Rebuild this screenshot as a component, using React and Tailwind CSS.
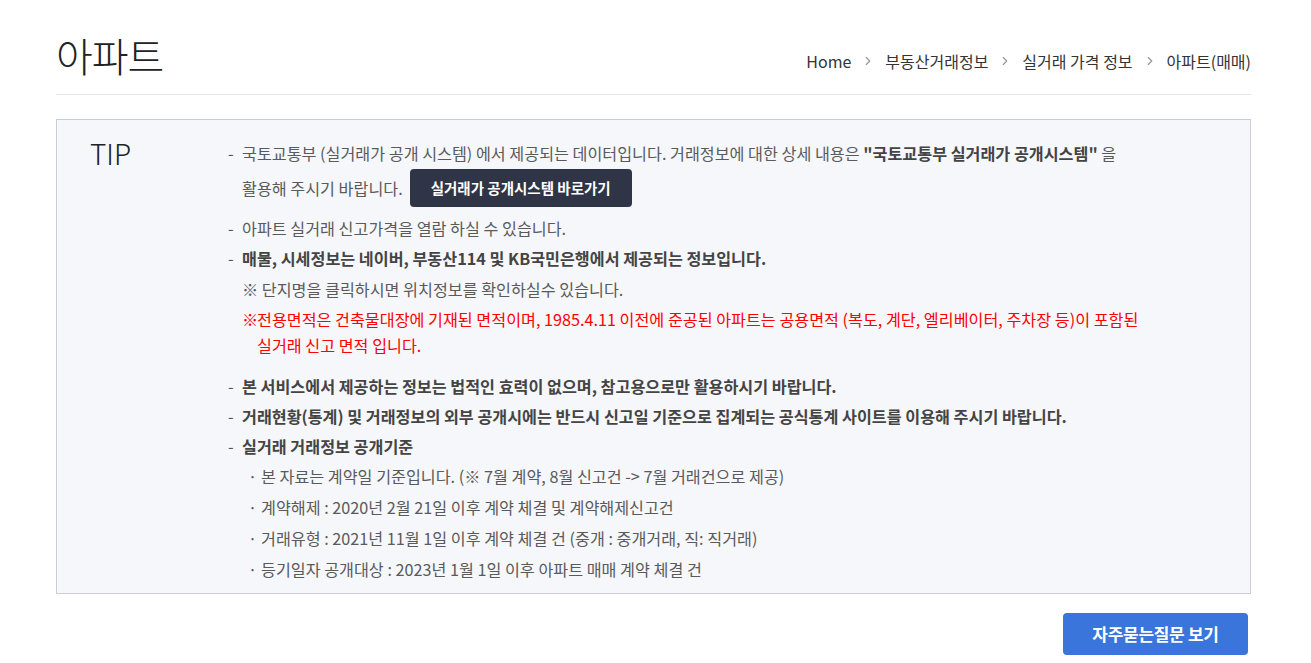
import React from "react";
import { ChevronRight } from "lucide-react";

const Dash = ({ lh = "leading-[30px]" }) => <span className={`w-[14px] shrink-0 font-normal text-[#555] ${lh}`}>-</span>;
const Dot = () => <span className="w-[13px] shrink-0">·</span>;

const App = () => {
  return (
    <div
      className="min-h-screen bg-white"
      style={{ fontFamily: '"Noto Sans CJK KR", "Noto Sans", sans-serif' }}
    >
      <div className="ml-[56px] w-[1195px]">
        {/* header */}
        <div className="flex items-end justify-between border-b border-[#e4e6ea] pt-[33px] pb-[17px]">
          <h1 className="text-[40px] leading-[44px] font-light tracking-[-1px] text-[#222]">
            아파트
          </h1>
          <nav className="mb-[4px] flex items-center text-[16px] leading-[24px] text-[#333]">
            <span>Home</span>
            <ChevronRight size={14} strokeWidth={2} className="mx-[10px] text-[#999]" />
            <span>부동산거래정보</span>
            <ChevronRight size={14} strokeWidth={2} className="mx-[10px] text-[#999]" />
            <span>실거래 가격 정보</span>
            <ChevronRight size={14} strokeWidth={2} className="mx-[10px] text-[#999]" />
            <span>아파트(매매)</span>
          </nav>
        </div>

        {/* tip box */}
        <div className="mt-[24px] flex border border-[#c9ced6] bg-[#f5f7fa] pl-[33px] pt-[18px] pb-[8px]">
          <div className="w-[138px] shrink-0 text-[28px] leading-[30px] font-light text-[#222]">
            TIP
          </div>
          <ul className="text-[16.2px] text-[#5a5a5a] whitespace-nowrap">
            <li className="flex">
              <Dash />
              <div>
                <p className="leading-[30px]">
                  국토교통부 (실거래가 공개 시스템) 에서 제공되는 데이터입니다. 거래정보에 대한 상세 내용은{" "}
                  <b className="font-bold text-[#444]">"국토교통부 실거래가 공개시스템"</b> 을
                </p>
                <div className="mt-[1px] flex h-[38px] items-center">
                  <span>활용해 주시기 바랍니다.</span>
                  <button className="ml-[7px] h-[38px] rounded-[4px] bg-[#2f3447] px-[21px] text-[14.5px] font-bold text-white">
                    실거래가 공개시스템 바로가기
                  </button>
                </div>
              </div>
            </li>
            <li className="mt-[6px] flex leading-[30px]">
              <Dash />
              <span>아파트 실거래 신고가격을 열람 하실 수 있습니다.</span>
            </li>
            <li className="flex">
              <Dash lh="leading-[31px]" />
              <div>
                <p className="leading-[31px] font-bold text-[#444]">
                  매물, 시세정보는 네이버, 부동산114 및 KB국민은행에서 제공되는 정보입니다.
                </p>
                <p className="leading-[31px]">※ 단지명을 클릭하시면 위치정보를 확인하실수 있습니다.</p>
                <div className="mt-[1px] flex leading-[26px] text-[#ff0000]">
                  <span className="w-[15px] shrink-0">※</span>
                  <span>
                    전용면적은 건축물대장에 기재된 면적이며, 1985.4.11 이전에 준공된 아파트는 공용면적 (복도, 계단, 엘리베이터, 주차장 등)이 포함된
                    <br />
                    실거래 신고 면적 입니다.
                  </span>
                </div>
              </div>
            </li>
            <li className="mt-[13px] flex leading-[30px] font-bold text-[#444]">
              <Dash />
              <span>본 서비스에서 제공하는 정보는 법적인 효력이 없으며, 참고용으로만 활용하시기 바랍니다.</span>
            </li>
            <li className="flex leading-[30px] font-bold text-[#444]">
              <Dash />
              <span>
                거래현황(통계) 및 거래정보의 외부 공개시에는 반드시 신고일 기준으로 집계되는 공식통계 사이트를 이용해 주시기 바랍니다.
              </span>
            </li>
            <li className="flex">
              <Dash />
              <div>
                <p className="leading-[30px] font-bold text-[#444]">실거래 거래정보 공개기준</p>
                <ul className="-ml-[14px] pl-[20px]">
                  <li className="flex leading-[31px]">
                    <Dot />
                    <span>본 자료는 계약일 기준입니다. (※ 7월 계약, 8월 신고건 -&gt; 7월 거래건으로 제공)</span>
                  </li>
                  <li className="flex leading-[31px]">
                    <Dot />
                    <span>계약해제 : 2020년 2월 21일 이후 계약 체결 및 계약해제신고건</span>
                  </li>
                  <li className="flex leading-[31px]">
                    <Dot />
                    <span>거래유형 : 2021년 11월 1일 이후 계약 체결 건 (중개 : 중개거래, 직: 직거래)</span>
                  </li>
                  <li className="flex leading-[31px]">
                    <Dot />
                    <span>등기일자 공개대상 : 2023년 1월 1일 이후 아파트 매매 계약 체결 건</span>
                  </li>
                </ul>
              </div>
            </li>
          </ul>
        </div>

        {/* faq button */}
        <div className="mt-[19px] flex justify-end pr-[3px]">
          <button className="h-[42px] w-[185px] rounded-[4px] bg-[#3a75dc] text-[17px] font-bold tracking-[-0.3px] text-white">
            자주묻는질문 보기
          </button>
        </div>
      </div>
    </div>
  );
};

export default App;
